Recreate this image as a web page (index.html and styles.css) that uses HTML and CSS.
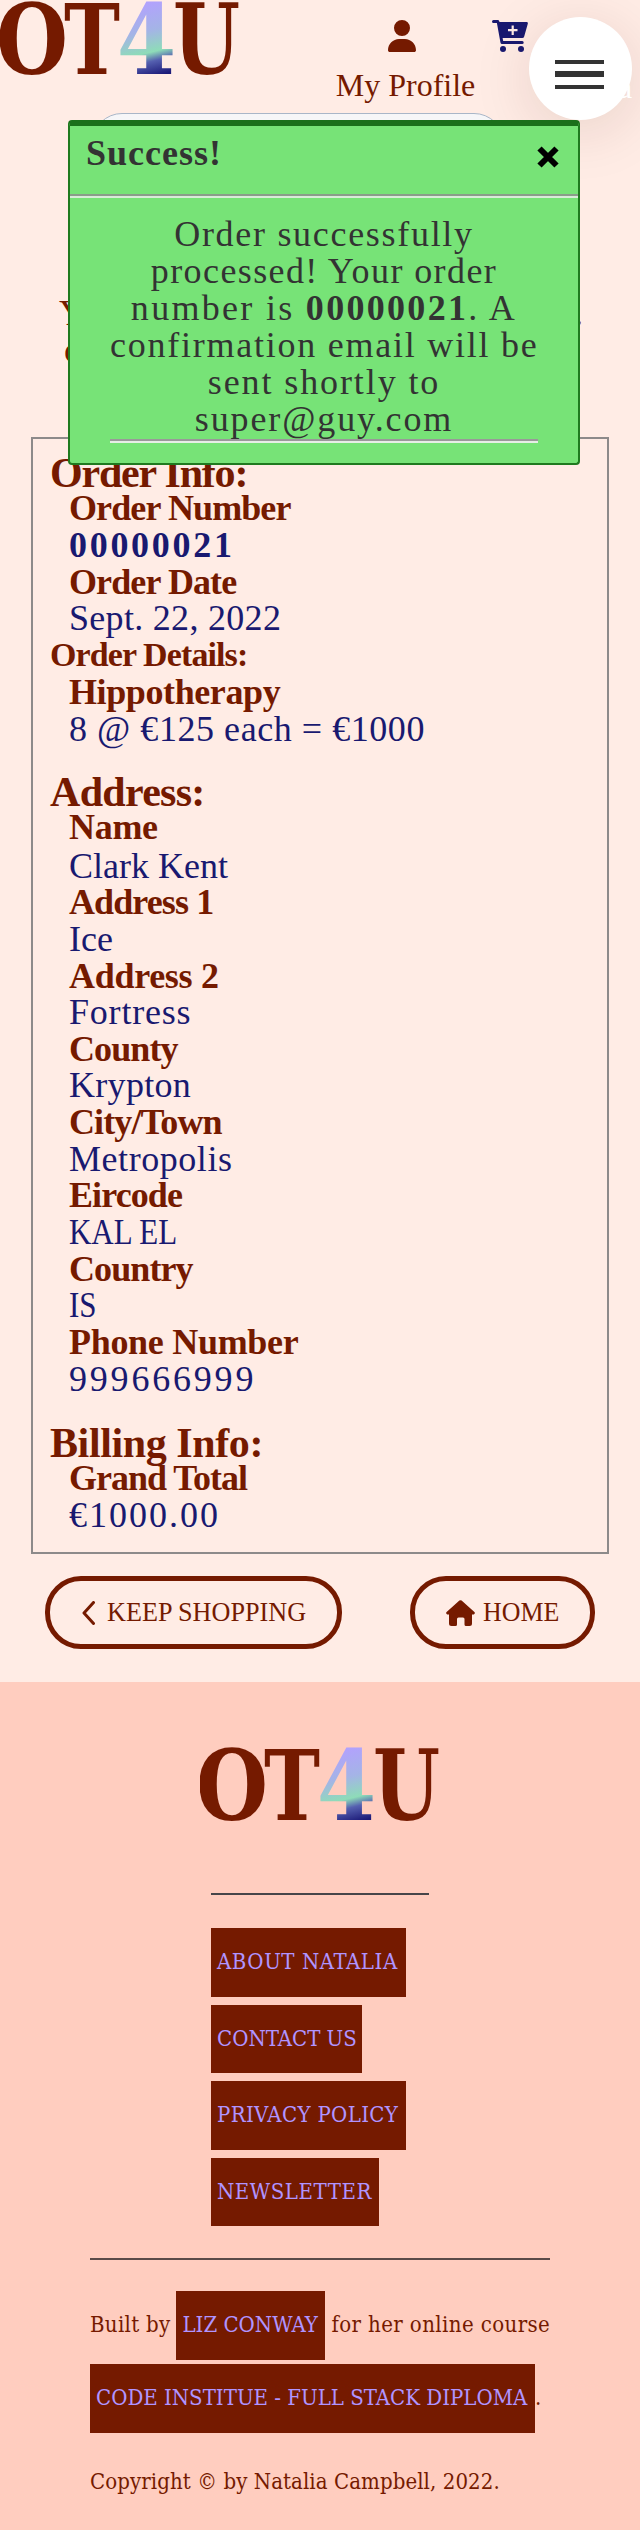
FILE: index.html
```html
<!DOCTYPE html>
<html lang="en">
<head>
<meta charset="utf-8">
<title>OT4U</title>
<link rel="stylesheet" href="styles.css">
</head>
<body>
<svg class="defs" width="0" height="0">
  <defs>
    <linearGradient id="four" gradientUnits="userSpaceOnUse" x1="138" y1="2" x2="156" y2="76">
      <stop offset="0" stop-color="#b3a0ff"/>
      <stop offset="0.4" stop-color="#a4b4e6"/>
      <stop offset="0.68" stop-color="#8edcb8"/>
      <stop offset="0.8" stop-color="#5560b0"/>
      <stop offset="1" stop-color="#1c1a78"/>
    </linearGradient>
    <symbol id="logo" viewBox="0 0 240 78">
      <g class="logo-text">
        <text x="-4" y="74" textLength="72" lengthAdjust="spacingAndGlyphs">O</text>
        <text x="64" y="74" textLength="56" lengthAdjust="spacingAndGlyphs">T</text>
        <text class="logo-four" x="117" y="74" textLength="59" lengthAdjust="spacingAndGlyphs">4</text>
        <text x="173" y="74" textLength="67" lengthAdjust="spacingAndGlyphs">U</text>
      </g>
    </symbol>
  </defs>
</svg>

<header class="header">
  <svg class="logo" width="240" height="78"><use href="#logo"/></svg>
  <a class="profile">
    <svg width="28" height="32" viewBox="0 0 448 512"><path fill="currentColor" d="M224 256A128 128 0 1 0 224 0a128 128 0 1 0 0 256zm-46 48C80 304 0 384 0 482c0 17 13 30 30 30h388c17 0 30-13 30-30 0-98-80-178-178-178z"/></svg>
    <span>My Profile</span>
  </a>
  <svg class="cart" width="36" height="32" viewBox="0 0 36 32"><path fill="currentColor" d="M1.5 0H6q1.200 0 1.500 2H34.500q1.700 0 1.300 1.700L32.200 16.500q-.4 1.500-2 1.500H10.600l.6 3h19q1.500 0 1.500 1.500T30.200 24H10q-1.300 0-1.500-1.300L4.900 3H1.500Q0 3 0 1.500T1.500 0z"/><circle cx="11" cy="29" r="3" fill="currentColor"/><circle cx="29" cy="29" r="3" fill="currentColor"/><path d="M20.700 5.500v9.500M16 10.200h9.500" stroke="#ffece5" stroke-width="2.200"/></svg>
</header>
<div class="search"></div>

<main class="main">
  <div class="intro">
    <p class="intro-row"><span>Y</span><span>.</span></p>
    <p class="intro-second">o</p>
  </div>

  <section class="order">
    <h2 class="ls-n14">Order Info:</h2>
    <dl>
      <dt>Order Number</dt><dd class="strong">00000021</dd>
      <dt class="ls-n11">Order Date</dt><dd class="ls-p2">Sept. 22, 2022</dd>
      <dt class="details">Order Details:</dt>
      <dt class="ls-n5">Hippotherapy</dt><dd class="ls-p5">8 @ €125 each = €1000</dd>
    </dl>
    <h2>Address:</h2>
    <dl class="address">
      <dt class="first">Name</dt><dd>Clark Kent</dd>
      <dt>Address 1</dt><dd>Ice</dd>
      <dt class="ls-n3">Address 2</dt><dd class="ls-p7">Fortress</dd>
      <dt>County</dt><dd class="ls-p2">Krypton</dd>
      <dt class="ls-n11">City/Town</dt><dd class="ls-p5">Metropolis</dd>
      <dt>Eircode</dt><dd class="tight">KAL EL</dd>
      <dt class="ls-n11">Country</dt><dd class="tight">IS</dd>
      <dt class="ls-n3">Phone Number</dt><dd class="ls-p24">999666999</dd>
    </dl>
    <h2 class="ls-n5">Billing Info:</h2>
    <dl>
      <dt class="ls-n12">Grand Total</dt><dd class="ls-p20">€1000.00</dd>
    </dl>
  </section>

  <div class="actions">
    <a class="pill keep">
      <svg width="13" height="24" viewBox="0 0 13 24"><path d="M11.500 1.500 2 12l9.500 10.500" fill="none" stroke="currentColor" stroke-width="3" stroke-linecap="round" stroke-linejoin="round"/></svg>
      <span>KEEP SHOPPING</span>
    </a>
    <a class="pill home">
      <svg width="29" height="26" viewBox="0 0 29 26"><path fill="currentColor" d="M13.400.6q1.100-.9 2.200 0L28.400 12q1.200 1.500-.6 2.500H26V23.500Q26 26 23.500 26H20q-1.500 0-1.500-1.500V19q0-1.500-1.500-1.500H12.500Q11 17.500 11 19v5.500Q11 26 9.500 26H5.500Q3 26 3 23.500V14.500H1.200Q-.6 13.500.6 12z"/></svg>
      <span>HOME</span>
    </a>
  </div>
</main>

<footer class="footer">
  <svg class="footer-logo" width="240" height="78"><use href="#logo"/></svg>
  <nav class="links">
    <a class="tag w-about">ABOUT NATALIA</a>
    <a class="tag w-contact">CONTACT US</a>
    <a class="tag w-about w-privacy">PRIVACY POLICY</a>
    <a class="tag w-news">NEWSLETTER</a>
  </nav>
  <div class="credits">
    <p class="built"><span class="built-a">Built by</span><a class="tag w-liz">LIZ CONWAY</a><span class="built-b">for her online course</span></p>
    <p class="course"><a class="tag w-course">CODE INSTITUE - FULL STACK DIPLOMA</a><span>.</span></p>
    <p class="copyright">Copyright © by Natalia Campbell, 2022.</p>
  </div>
</footer>

<div class="menu">
  <span class="bar"></span><span class="bar mid"></span><span class="bar"></span>
  <span class="menu-label">a</span>
</div>

<div class="toast">
  <div class="toast-head">
    <strong>Success!</strong>
    <svg width="22" height="22" viewBox="0 0 22 22"><path d="M2.500 2.500l17 17M19.500 2.500l-17 17" stroke="#000" stroke-width="6"/></svg>
  </div>
  <div class="toast-body">
    <div class="l1">Order successfully</div>
    <div class="l2">processed! Your order</div>
    <div class="l3">number is <b>00000021</b>. A</div>
    <div class="l4">confirmation email will be</div>
    <div class="l5">sent shortly to</div>
    <div class="l6">super@guy.com</div>
    <hr>
  </div>
</div>
</body>
</html>
```
FILE: styles.css
```css
* { box-sizing: border-box; }
body {
  position: relative;
  margin: 0;
  width: 640px;
  height: 2530px;
  overflow: hidden;
  background: #ffece5;
  color: #751a00;
  font-family: "Liberation Serif", serif;
  font-size: 36px;
}
h2, dl, dt, dd, p { margin: 0; }
svg { display: block; flex: none; }
.defs { position: absolute; }

/* header */
.header { display: flex; align-items: flex-start; height: 113px; }
.logo-text { font: bold 98px "DejaVu Serif", serif; fill: #751a00; }
.logo-four { fill: url(#four); }
.profile {
  display: flex;
  flex-direction: column;
  align-items: center;
  width: 142px;
  margin-left: 94px;
  padding: 20px 4px 0 0;
  font-size: 32px;
  line-height: 36px;
}
.profile svg { margin: 0 0 15px -3px; }
.profile span { margin-left: 5px; white-space: nowrap; }
.cart { margin: 20px 0 0 16px; color: #191970; }
.search {
  width: 412px;
  height: 60px;
  margin-left: 92px;
  border: 1.500px solid #a9b6c8;
  border-radius: 30px;
  background: #f6f6f8;
}

/* order summary */
.main { height: 1509px; }
.intro { height: 264px; padding: 122px 57px 0 59px; line-height: 37px; }
.intro-row { display: flex; justify-content: space-between; }
.intro-second { padding-left: 5px; }
.order {
  height: 1117px;
  margin: 0 31px;
  padding: 15px 18px 0 17px;
  border: 2px solid #8d8a8a;
}
h2 {
  margin: 25px 0 -2px;
  font-size: 42px;
  line-height: 38px;
  letter-spacing: -0.7px;
}
h2:first-child { margin-top: 0; }
dl { padding-left: 19px; line-height: 36.800px; }
.address { line-height: 36.650px; margin-bottom: 27px; }
dt { font-weight: bold; letter-spacing: -0.9px; }
dd { color: #191970; }
.first { margin-bottom: 2.300px; letter-spacing: -0.300px; }
.details { margin-left: -19px; font-size: 34px; }
.strong { font-weight: bold; letter-spacing: 2.700px; }
.tight { transform: scaleX(0.86); transform-origin: left; }
.ls-n14 { letter-spacing: -1.200px; }
.ls-n12 { letter-spacing: -1px; }
.ls-n11 { letter-spacing: -0.900px; }
.ls-n5 { letter-spacing: -0.400px; }
.ls-n3 { letter-spacing: -0.300px; }
.ls-p2 { letter-spacing: 0.300px; }
.ls-p5 { letter-spacing: 0.550px; }
.ls-p7 { letter-spacing: 0.800px; }
.ls-p20 { letter-spacing: 2px; }
.ls-p24 { letter-spacing: 2.800px; }

.actions { display: flex; justify-content: space-between; padding: 22px 45px 0; }
.pill {
  display: flex;
  align-items: center;
  height: 73px;
  border: 5px solid #751a00;
  border-radius: 36px;
  font-size: 28px;
  white-space: nowrap;
}
.pill span { margin-top: -2px; transform-origin: left; }
.keep { width: 297px; padding-left: 32px; gap: 12px; }
.keep span { transform: scaleX(0.935); }
.home { width: 185px; padding-left: 31px; gap: 8px; }
.home span { transform: scaleX(0.925); }

/* footer */
.footer {
  height: 848px;
  padding-top: 64px;
  background: #ffcdbf;
  font-family: "DejaVu Serif Condensed", "DejaVu Serif", serif;
  font-stretch: condensed;
  font-size: 22px;
}
.footer-logo { margin-left: 200px; }
.links {
  display: flex;
  flex-direction: column;
  align-items: flex-start;
  gap: 8px;
  width: 218px;
  margin: 69px 0 0 211px;
  padding-top: 33px;
  border-top: 2px solid #47464a;
}
.tag {
  display: block;
  flex: none;
  height: 68.500px;
  padding-left: 7px;
  background: #751a00;
  color: #b094ff;
  line-height: 68px;
  white-space: nowrap;
}
.w-about { width: 195px; padding-left: 6px; letter-spacing: 0.550px; }
.w-privacy { letter-spacing: 0.350px; }
.w-contact { width: 151px; padding-left: 6px; }
.w-news { width: 168px; padding-left: 6px; letter-spacing: 0.550px; }
.w-liz { width: 149px; margin: 0 6px; padding-left: 6px; }
.w-course { width: 445px; padding-left: 6px; }
.credits {
  width: 460px;
  margin: 32px 0 0 90px;
  border-top: 2px solid #5a4a48;
  white-space: nowrap;
}
.built { display: flex; margin-top: 31px; line-height: 68px; }
.built-a { width: 82px; letter-spacing: 0.300px; }
.built-b { letter-spacing: 0.400px; }
.course { display: flex; margin-top: 4.500px; line-height: 68px; }
.copyright { margin-top: 35px; line-height: 28px; letter-spacing: 0.080px; }

/* floating menu button */
.menu {
  position: absolute;
  left: 529px;
  top: 17px;
  width: 103px;
  height: 103px;
  padding: 42.500px 0 0 26px;
  border-radius: 50%;
  background: #fff;
  box-shadow: 0 10px 60px rgba(80, 20, 0, 0.13);
}
.bar { display: block; width: 49px; height: 4px; margin-bottom: 7px; background: #333; }
.bar.mid { height: 6px; margin-bottom: 8px; }
.menu-label {
  position: absolute;
  left: 89px;
  top: 52px;
  color: #fff;
  font-size: 32px;
  line-height: 36px;
}

/* confirmation message */
.toast {
  position: absolute;
  left: 68px;
  top: 120px;
  width: 512px;
  height: 345px;
  border: 2px solid #1f7a1f;
  border-top: 6px solid #1b701b;
  border-radius: 4px;
  background: #77e377;
  color: #333;
}
.toast-head {
  display: flex;
  justify-content: space-between;
  height: 72px;
  padding: 6px 19px 0 16px;
  border-bottom: 2px solid #d8ecd8;
  box-shadow: inset 0 -2px #8a9d8a;
  line-height: 43px;
}
.toast-head strong { letter-spacing: 1px; }
.toast-head svg { margin-top: 14px; }
.toast-body { padding: 17.500px 40px 0; line-height: 37px; text-align: center; white-space: nowrap; }
.toast-body hr { height: 4px; margin: 1px 0 0; border: 0; border-top: 2px solid #999; background: #e6eee6; }
.l1 { letter-spacing: 1.700px; }
.l2 { letter-spacing: 1.400px; }
.l3 { letter-spacing: 2.300px; }
.l4 { letter-spacing: 1.750px; }
.l5 { letter-spacing: 1.900px; }
.l6 { letter-spacing: 1.900px; }
```
